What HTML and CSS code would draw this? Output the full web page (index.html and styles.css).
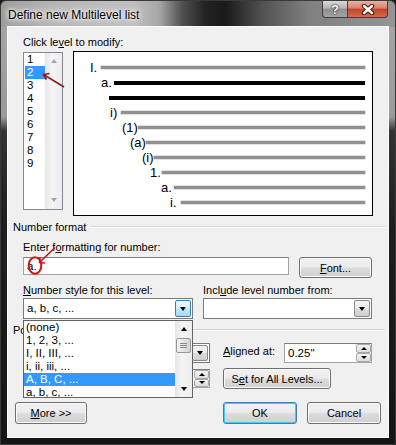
FILE: index.html
```html
<!DOCTYPE html>
<html lang="en">
<head>
    <meta charset="UTF-8">
    <title>Define new Multilevel list</title>
    <link rel="stylesheet" href="styles.css">
</head>
<body>

<div class="window">
    <div class="titlebar">
        <span class="title">Define new Multilevel list</span>
        <div class="caption-btns">
            <span class="cap-help">?</span>
            <span class="cap-close">
                <svg width="14" height="11" viewBox="0 0 14 11">
                    <path d="M3 2 L11 9 M11 2 L3 9" stroke="#5a1a0c" stroke-width="4.5" stroke-linecap="round"/>
                    <path d="M3 2 L11 9 M11 2 L3 9" stroke="#fff" stroke-width="2.4" stroke-linecap="round"/>
                </svg>
            </span>
        </div>
    </div>

    <div class="frame">
        <div class="client">
            <div class="label top-label">Click le<u>v</u>el to modify:</div>

            <div class="level-row">
                <div class="level-list">
                    <div class="items">
                        <div class="item">1</div>
                        <div class="item selected">2</div>
                        <div class="item">3</div>
                        <div class="item">4</div>
                        <div class="item">5</div>
                        <div class="item">6</div>
                        <div class="item">7</div>
                        <div class="item">8</div>
                        <div class="item">9</div>
                    </div>
                    <div class="vscroll off">
                        <span class="arr-up"></span>
                        <span class="arr-down"></span>
                    </div>
                </div>

                <div class="preview">
                    <div class="pv-row"><span class="pv-num">I.</span><span class="pv-bar"></span></div>
                    <div class="pv-row"><span class="pv-num">a.</span><span class="pv-bar bold"></span></div>
                    <div class="pv-row"><span class="pv-num"></span><span class="pv-bar bold"></span></div>
                    <div class="pv-row"><span class="pv-num">i)</span><span class="pv-bar"></span></div>
                    <div class="pv-row"><span class="pv-num">(1)</span><span class="pv-bar"></span></div>
                    <div class="pv-row"><span class="pv-num">(a)</span><span class="pv-bar"></span></div>
                    <div class="pv-row"><span class="pv-num">(i)</span><span class="pv-bar"></span></div>
                    <div class="pv-row"><span class="pv-num">1.</span><span class="pv-bar"></span></div>
                    <div class="pv-row"><span class="pv-num">a.</span><span class="pv-bar"></span></div>
                    <div class="pv-row"><span class="pv-num">i.</span><span class="pv-bar"></span></div>
                </div>
            </div>

            <div class="group-head">Number format</div>
            <div class="label indent">Enter f<u>o</u>rmatting for number:</div>
            <div class="format-row">
                <div class="textbox">a.</div>
                <button class="btn font-btn"><u>F</u>ont...</button>
            </div>

            <div class="style-grid">
                <div class="label"><u>N</u>umber style for this level:</div>
                <div class="label">Incl<u>u</u>de level number from:</div>
                <div class="combo open">
                    <span class="combo-text">a, b, c, ...</span>
                    <span class="drop hot"><span class="arr-down"></span></span>
                    <div class="droplist">
                        <div class="dl-items">
                            <div class="dl-item">(none)</div>
                            <div class="dl-item">1, 2, 3, ...</div>
                            <div class="dl-item">I, II, III, ...</div>
                            <div class="dl-item">i, ii, iii, ...</div>
                            <div class="dl-item selected">A, B, C, ...</div>
                            <div class="dl-item">a, b, c, ...</div>
                        </div>
                        <div class="vscroll">
                            <span class="arr-up"></span>
                            <span class="thumb"><i></i><i></i><i></i></span>
                            <span class="arr-down"></span>
                        </div>
                    </div>
                </div>
                <div class="combo">
                    <span class="combo-text"></span>
                    <span class="drop"><span class="arr-down"></span></span>
                </div>
            </div>

            <div class="group-head">Po<span class="under-list">sition</span></div>
            <div class="pos-grid">
                <!-- label and field content sit under the open list -->
                <div class="label"></div>
                <div class="combo">
                    <span class="combo-text"></span>
                    <span class="drop"><span class="arr-down"></span></span>
                </div>
                <div class="label gap-left"><u>A</u>ligned at:</div>
                <div class="spin">
                    <span class="spin-text">0.25"</span>
                    <span class="spin-btns"><span><i class="arr-up"></i></span><span><i class="arr-down"></i></span></span>
                </div>

                <div class="label"></div>
                <div class="spin small">
                    <span class="spin-text"></span>
                    <span class="spin-btns"><span><i class="arr-up"></i></span><span><i class="arr-down"></i></span></span>
                </div>
                <button class="btn set-btn">S<u>e</u>t for All Levels...</button>
            </div>

            <div class="bottom-row">
                <button class="btn more-btn"><u>M</u>ore &gt;&gt;</button>
                <button class="btn ok-btn">OK</button>
                <button class="btn cancel-btn">Cancel</button>
            </div>
        </div>
    </div>

    <!-- annotations drawn over the dialog -->
    <svg class="marks" width="396" height="445" viewBox="0 0 396 445">
        <path d="M64 87 L43.5 74.5" stroke="#8b1c1c" stroke-width="1.6" fill="none"/>
        <path d="M49.5 73.5 L43.5 74.5 L46.5 79.5" stroke="#8b1c1c" stroke-width="1.6" fill="none"/>
        <ellipse cx="35" cy="265.5" rx="6.3" ry="8.3" stroke="#d41414" stroke-width="2" fill="none"/>
        <path d="M55 247.5 L39.5 262.5" stroke="#c41818" stroke-width="1.6" fill="none"/>
        <path d="M40 257 L39.5 262.5 L45 263" stroke="#c41818" stroke-width="1.6" fill="none"/>
        <path d="M128 376.5 L128 394 L143 386.5 Z" stroke="#000" stroke-width="2.2" fill="#fff" stroke-linejoin="round"/>
    </svg>
</div>

</body>
</html>
```

FILE: styles.css
```css
body {
    margin: 0;
    background: #1b1b1b;
    font-family: "Liberation Sans", Arial, sans-serif;
    font-size: 11px;
    color: #000;
}

.window {
    position: relative;
    width: 396px;
    height: 445px;
    box-sizing: border-box;
    border: 1px solid #3a3a3a;
    border-radius: 6px 6px 0 0;
    overflow: hidden;
    background: #1d1d1d;
}

/* title bar - aero glass */
.titlebar {
    height: 26px;
    display: flex;
    justify-content: space-between;
    background: linear-gradient(to right, #9c9c9c 0, #b4b4b4 12%, #c0c0c0 33%, #a8a8a8 40%, #505050 46%, #222 52%, #1a1a1a 57%, #505050 66%, #808080 78%, #949494 100%);
}
.title {
    margin: 7px 0 0 7px;
    font-size: 12px;
    line-height: 14px;
    height: 14px;
    text-shadow: 0 0 6px #fff, 0 0 3px #fff, 0 0 10px #fff;
}
.caption-btns {
    display: flex;
    margin-right: 7px;
    height: 17px;
}
.cap-help, .cap-close {
    display: flex;
    align-items: center;
    justify-content: center;
    height: 17px;
    box-sizing: border-box;
    border: 1px solid #3f3f3f;
    border-top: none;
}
.cap-help {
    width: 25px;
    border-radius: 0 0 0 4px;
    border-right: none;
    background: linear-gradient(#d9d9d9 0, #b4b4b4 45%, #8f8f8f 50%, #a3a3a3 100%);
    color: #fff;
    font-weight: bold;
    font-size: 13px;
    text-shadow: 0 0 2px #222, 0 0 1px #000;
}
.cap-close {
    width: 41px;
    border-radius: 0 0 4px 0;
    background: linear-gradient(#eab0a2 0, #d9826b 45%, #c2452a 50%, #d66a4e 100%);
}

.frame {
    padding: 0 7px 7px 7px;
    background: linear-gradient(to bottom, #a4a4a4 0, #9a9a9a 90px, #333 104px, #1e1e1e 200px, #151515 100%);
}

.client {
    height: 410px;
    background: #f0f0f0;
    box-shadow: 0 0 0 1px #fdfdfd;
}

.label {
    line-height: 14px;
    height: 14px;
    white-space: nowrap;
}
.top-label { padding: 8px 0 0 15px; }
.indent { margin: 6px 0 0 15px; }

/* level list + preview */
.level-row {
    display: flex;
    padding-left: 15px;
    margin-top: 2px;
}
.level-list {
    display: flex;
    width: 40px;
    height: 158px;
    margin-top: 1px;
    box-sizing: border-box;
    border: 1px solid #828790;
    background: #fff;
}
.items {
    width: 22px;
}
.item {
    height: 13px;
    line-height: 13px;
    margin-left: 1px;
    padding-left: 2px;
    font-size: 11.5px;
}
.item.selected {
    background: #3399ff;
    color: #fff;
}

.vscroll {
    width: 17px;
    display: flex;
    flex-direction: column;
    align-items: center;
    justify-content: space-between;
    padding: 6px 0 7px;
    box-sizing: border-box;
    background: linear-gradient(to right, #e6e6e6, #f4f4f4 40%, #ededed);
}
.arr-up, .arr-down {
    display: block;
    width: 0;
    height: 0;
    border-left: 3.5px solid transparent;
    border-right: 3.5px solid transparent;
}
.arr-up { border-bottom: 4px solid #000; }
.arr-down { border-top: 4px solid #000; }
.vscroll.off .arr-up { border-bottom-color: #a6a6a6; }
.vscroll.off .arr-down { border-top-color: #a6a6a6; }

.preview {
    width: 300px;
    height: 165px;
    margin-left: 10px;
    box-sizing: border-box;
    border: 1px solid #000;
    background: #fff;
    padding: 8px 7px 0 0;
}
.pv-row {
    display: flex;
    align-items: center;
    height: 15px;
    font-size: 13px;
}
.pv-num {
    flex: none;
    line-height: 15px;
}
.pv-bar {
    flex: 1;
    height: 3px;
    background: #909090;
    box-shadow: 0 0 0 0.5px #c4c4c4;
}
.pv-bar.bold {
    height: 4px;
    background: #000;
    box-shadow: none;
}
.pv-row:nth-child(1) { padding-left: 16px; }
.pv-row:nth-child(1) .pv-num { width: 11px; }
.pv-row:nth-child(2) { padding-left: 27px; }
.pv-row:nth-child(2) .pv-num { width: 13px; }
.pv-row:nth-child(3) { padding-left: 35px; }
.pv-row:nth-child(3) .pv-num { width: 0; }
.pv-row:nth-child(4) { padding-left: 36px; }
.pv-row:nth-child(4) .pv-num { width: 11px; }
.pv-row:nth-child(5) { padding-left: 48px; }
.pv-row:nth-child(5) .pv-num { width: 16px; }
.pv-row:nth-child(6) { padding-left: 56px; }
.pv-row:nth-child(6) .pv-num { width: 16px; }
.pv-row:nth-child(7) { padding-left: 68px; }
.pv-row:nth-child(7) .pv-num { width: 12px; }
.pv-row:nth-child(8) { padding-left: 76px; }
.pv-row:nth-child(8) .pv-num { width: 12px; }
.pv-row:nth-child(9) { padding-left: 87px; }
.pv-row:nth-child(9) .pv-num { width: 13px; }
.pv-row:nth-child(10) { padding-left: 96px; }
.pv-row:nth-child(10) .pv-num { width: 11px; }

/* group headers */
.group-head {
    display: flex;
    align-items: center;
    margin-top: 4px;
    padding-left: 5px;
    line-height: 14px;
    height: 14px;
    white-space: nowrap;
}
.group-head::after {
    content: "";
    flex: 1;
    margin: 0 3px 0 4px;
    border-top: 1px solid #d5d5d5;
    border-bottom: 1px solid #fff;
}
.under-list {
    visibility: hidden;
}

/* number format */
.format-row {
    display: flex;
    align-items: flex-start;
    margin: 3px 0 0 15px;
}
.textbox {
    width: 266px;
    height: 18px;
    box-sizing: border-box;
    border: 1px solid #a4a4a4;
    border-top-color: #7c7c7c;
    background: #fff;
    padding-left: 3px;
    line-height: 16px;
    font-size: 11.5px;
}

.btn {
    box-sizing: border-box;
    height: 21px;
    padding: 0;
    border: 1px solid #707070;
    border-radius: 3px;
    background: linear-gradient(#f2f2f2 0, #ebebeb 48%, #dddddd 52%, #cfcfcf 100%);
    box-shadow: inset 0 0 0 1px #fbfbfb;
    font-family: inherit;
    font-size: 11px;
    color: #000;
    text-align: center;
}
.font-btn {
    width: 73px;
    margin-left: 10px;
}

.style-grid {
    display: grid;
    grid-template-columns: 170px 169px;
    column-gap: 10px;
    row-gap: 1px;
    margin-top: 5px;
    padding-left: 15px;
}

.combo {
    position: relative;
    display: flex;
    height: 21px;
    box-sizing: border-box;
    border: 1px solid #7a7a7a;
    background: #fff;
}
.combo-text {
    flex: 1;
    padding-left: 3px;
    line-height: 19px;
    font-size: 11.5px;
}
.drop {
    width: 16px;
    display: flex;
    align-items: center;
    justify-content: center;
    margin: 1px 1px 1px 0;
    box-sizing: border-box;
    border: 1px solid #8a8a8a;
    border-radius: 2px;
    background: linear-gradient(#f2f2f2 0, #ebebeb 48%, #dddddd 52%, #cfcfcf 100%);
}
.drop.hot {
    border-color: #3c7fb1;
    background: linear-gradient(#eaf6fd 0, #d9f0fc 48%, #bee6fd 52%, #a7d9f5 100%);
}
.combo.open {
    z-index: 5;
}

.droplist {
    position: absolute;
    left: -1px;
    top: calc(100% + 2px);
    width: 170px;
    height: 78px;
    box-sizing: border-box;
    border: 1px solid #646464;
    background: #fff;
    display: flex;
    overflow: hidden;
}
.dl-items {
    flex: 1;
}
.dl-item {
    height: 13px;
    line-height: 13px;
    padding-left: 2px;
    font-size: 11.5px;
    white-space: nowrap;
}
.dl-item.selected {
    background: #3399ff;
    color: #fff;
}
.droplist .vscroll {
    padding: 6px 0 6px;
    justify-content: flex-start;
}
.droplist .vscroll .arr-down {
    margin-top: auto;
}
.thumb {
    display: flex;
    flex-direction: column;
    align-items: center;
    justify-content: center;
    gap: 1px;
    width: 15px;
    height: 15px;
    margin-top: 7px;
    box-sizing: border-box;
    border: 1px solid #979797;
    border-radius: 2px;
    background: linear-gradient(to right, #f4f4f4, #e4e4e4 50%, #d4d4d4);
}
.thumb i {
    display: block;
    width: 7px;
    height: 1px;
    background: #8a8a8a;
}

/* position */
.pos-grid {
    display: grid;
    grid-template-columns: 115px 72px 74px 88px;
    grid-template-rows: 20px 21px;
    row-gap: 5px;
    margin-top: 6px;
    padding-left: 15px;
}
.pos-grid .label {
    margin-top: 1px;
}
.pos-grid .combo {
    height: 20px;
}
.gap-left {
    padding-left: 13px;
}
.spin {
    display: flex;
    height: 20px;
    box-sizing: border-box;
    border: 1px solid #a4a4a4;
    border-top-color: #7c7c7c;
    background: #fff;
}
.spin.small {
    height: 19px;
    margin-top: 1px;
}
.spin-text {
    flex: 1;
    padding-left: 3px;
    line-height: 18px;
    font-size: 11.5px;
}
.spin-btns {
    display: flex;
    flex-direction: column;
    width: 15px;
}
.spin-btns span {
    flex: 1;
    display: flex;
    align-items: center;
    justify-content: center;
    border: 1px solid #a7a7a7;
    border-radius: 2px;
    background: linear-gradient(#f4f4f4, #dcdcdc);
}
.spin-btns .arr-up { border-bottom-width: 3px; border-left-width: 3px; border-right-width: 3px; }
.spin-btns .arr-down { border-top-width: 3px; border-left-width: 3px; border-right-width: 3px; }
.set-btn {
    grid-column: 3 / span 2;
    justify-self: start;
    width: 108px;
    margin-left: 13px;
}

.bottom-row {
    display: flex;
    margin-top: 13px;
    padding-left: 7px;
}
.bottom-row .btn {
    height: 22px;
}
.more-btn { width: 72px; }
.ok-btn {
    width: 74px;
    margin-left: 136px;
    border-color: #3c7fb1;
    box-shadow: inset 0 0 0 1px #4fc4f3;
}
.cancel-btn {
    width: 74px;
    margin-left: 10px;
}

.marks {
    position: absolute;
    left: -1px;
    top: -1px;
    pointer-events: none;
}
```
